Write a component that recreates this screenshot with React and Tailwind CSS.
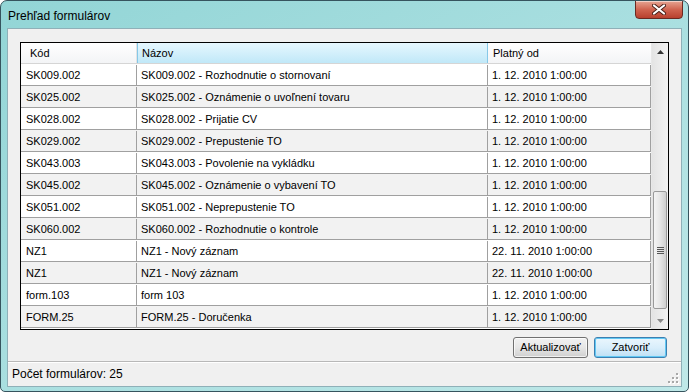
const rows = [
  ['SK009.002', 'SK009.002 - Rozhodnutie o stornovaní', '1. 12. 2010 1:00:00'],
  ['SK025.002', 'SK025.002 - Oznámenie o uvoľnení tovaru', '1. 12. 2010 1:00:00'],
  ['SK028.002', 'SK028.002 - Prijatie CV', '1. 12. 2010 1:00:00'],
  ['SK029.002', 'SK029.002 - Prepustenie TO', '1. 12. 2010 1:00:00'],
  ['SK043.003', 'SK043.003 - Povolenie na vykládku', '1. 12. 2010 1:00:00'],
  ['SK045.002', 'SK045.002 - Oznámenie o vybavení TO', '1. 12. 2010 1:00:00'],
  ['SK051.002', 'SK051.002 - Neprepustenie TO', '1. 12. 2010 1:00:00'],
  ['SK060.002', 'SK060.002 - Rozhodnutie o kontrole', '1. 12. 2010 1:00:00'],
  ['NZ1', 'NZ1 - Nový záznam', '22. 11. 2010 1:00:00'],
  ['NZ1', 'NZ1 - Nový záznam', '22. 11. 2010 1:00:00'],
  ['form.103', 'form 103', '1. 12. 2010 1:00:00'],
  ['FORM.25', 'FORM.25 - Doručenka', '1. 12. 2010 1:00:00'],
];

function Scrollbar() {
  return (
    <div className="w-[17px] flex flex-col bg-gradient-to-r from-[#e4e4e4] to-[#f3f3f3] border-l border-[#e8e8e8]">
      {/* up arrow */}
      <div className="h-[17px] flex items-center justify-center">
        <svg width="7" height="4" viewBox="0 0 7 4"><path d="M3.5 0 L7 4 L0 4 Z" fill="#333" /></svg>
      </div>
      <div className="flex-1 relative">
        <div className="absolute left-[1px] right-[1px] top-[131px] h-[118px] rounded-[2px] border border-[#9a9a9a] bg-gradient-to-r from-[#f4f4f4] via-[#e6e6e6] to-[#cfcfcf] flex items-center justify-center">
          <div className="flex flex-col gap-[1px]">
            <div className="w-[7px] h-[1px] bg-[#555]" />
            <div className="w-[7px] h-[1px] bg-[#555]" />
            <div className="w-[7px] h-[1px] bg-[#555]" />
            <div className="w-[7px] h-[1px] bg-[#555]" />
          </div>
        </div>
      </div>
      {/* down arrow */}
      <div className="h-[17px] flex items-center justify-center">
        <svg width="7" height="4" viewBox="0 0 7 4"><path d="M0 0 L7 0 L3.5 4 Z" fill="#888" /></svg>
      </div>
    </div>
  );
}

function Grid() {
  return (
    <div className="w-[649px] h-[288px] border border-black flex bg-white overflow-hidden">
      <div className="flex-1 flex flex-col">
        {/* header */}
        <div className="h-[21px] flex shrink-0 border-b border-[#d5d5d5] text-[11px] text-black">
          <div className="w-[116px] pl-[9px] pt-[1px] flex items-center bg-gradient-to-b from-white to-[#f3f4f6] border-r border-[#e3e3e3]">Kód</div>
          <div className="w-[351px] pl-[4px] pt-[1px] flex items-center bg-gradient-to-b from-[#e6f7fe] to-[#c0e8f8] border-l border-[#86c8e8] border-r border-[#9fd3ec]">Názov</div>
          <div className="w-[163px] pl-[5px] pt-[1px] flex items-center bg-gradient-to-b from-white to-[#f3f4f6]">Platný od</div>
        </div>
        {rows.map((r, i) => (
          <div
            key={i}
            className={`h-[22px] pt-[1px] flex shrink-0 border-b border-[#a0a0a0] text-[11px] text-black ${i % 2 === 1 ? 'bg-[#f2f2f2]' : 'bg-white'}`}
          >
            <div className="w-[116px] pl-[5px] flex items-center border-r border-[#a0a0a0] whitespace-nowrap">{r[0]}</div>
            <div className="w-[351px] pl-[4px] flex items-center border-r border-[#a0a0a0] whitespace-nowrap">{r[1]}</div>
            <div className="w-[163px] pl-[4px] flex items-center border-r border-[#a0a0a0] whitespace-nowrap">{r[2]}</div>
          </div>
        ))}
      </div>
      <Scrollbar />
    </div>
  );
}

function Grip() {
  const dots = [[8, 0], [4, 4], [8, 4], [0, 8], [4, 8], [8, 8]];
  return (
    <svg width="11" height="11" viewBox="0 0 11 11" className="absolute right-[2px] bottom-[2px]">
      {dots.map(([x, y], i) => (
        <g key={i}>
          <rect x={x + 1} y={y + 1} width="2" height="2" fill="#fff" />
          <rect x={x} y={y} width="2" height="2" fill="#a8a8a8" />
        </g>
      ))}
    </svg>
  );
}

export default function App() {
  return (
    <div
      className="w-[689px] h-[392px] flex flex-col border border-[#36545e] rounded-t-[7px] rounded-b-[5px] bg-gradient-to-br from-[#92d5d6] via-[#a9dfe0] to-[#bfe8e8] overflow-hidden"
      style={{ fontFamily: '"Liberation Sans", Arial, sans-serif' }}
    >
      {/* title bar */}
      <div className="h-[27px] flex justify-between items-start shrink-0">
        <div className="pl-[7px] pt-[6px] text-[12px] text-black">Prehľad formulárov</div>
        <div className="mr-[5px] mt-[-1px] w-[48px] h-[19px] rounded-b-[4px] border border-[#6a2a22] bg-gradient-to-b from-[#e6a593] via-[#d06450] to-[#b8402e] flex items-center justify-center shadow-[inset_0_1px_0_rgba(255,255,255,0.5)]">
          <svg width="14" height="11" viewBox="0 0 14 11">
            <path d="M2 1.5 L12 9.5 M12 1.5 L2 9.5" stroke="#4a2018" strokeWidth="4" strokeLinecap="round" />
            <path d="M2 1.5 L12 9.5 M12 1.5 L2 9.5" stroke="#ffffff" strokeWidth="2.2" strokeLinecap="round" />
          </svg>
        </div>
      </div>
      {/* client */}
      <div className="flex-1 mx-[6px] mb-[4px] border border-[#8fb0b8] bg-[#f0f0f0] flex flex-col">
        <div className="flex-1 pl-[12px] pt-[13px] flex flex-col">
          <Grid />
          <div className="flex gap-[6px] mt-[7px] pl-[493px]">
            <button className="w-[75px] h-[21px] rounded-[3px] border border-[#707070] bg-gradient-to-b from-[#f2f2f2] via-[#e6e6e6] to-[#d0d0d0] text-[11px] text-black shadow-[inset_0_0_0_1px_rgba(255,255,255,0.7)]">
              Aktualizovať
            </button>
            <button className="w-[73px] h-[21px] rounded-[3px] border border-[#3c7fb1] bg-gradient-to-b from-[#eaf6fd] via-[#d9eefb] to-[#bee0f4] text-[11px] text-black shadow-[inset_0_0_0_1px_#62c8f3]">
              Zatvoriť
            </button>
          </div>
        </div>
        {/* status bar */}
        <div className="h-[25px] shrink-0 border-t border-[#b8b8b8] shadow-[inset_0_1px_0_#fff] relative flex items-center pl-[4px] text-[12px] text-black">
          Počet formulárov: 25
          <Grip />
        </div>
      </div>
    </div>
  );
}
